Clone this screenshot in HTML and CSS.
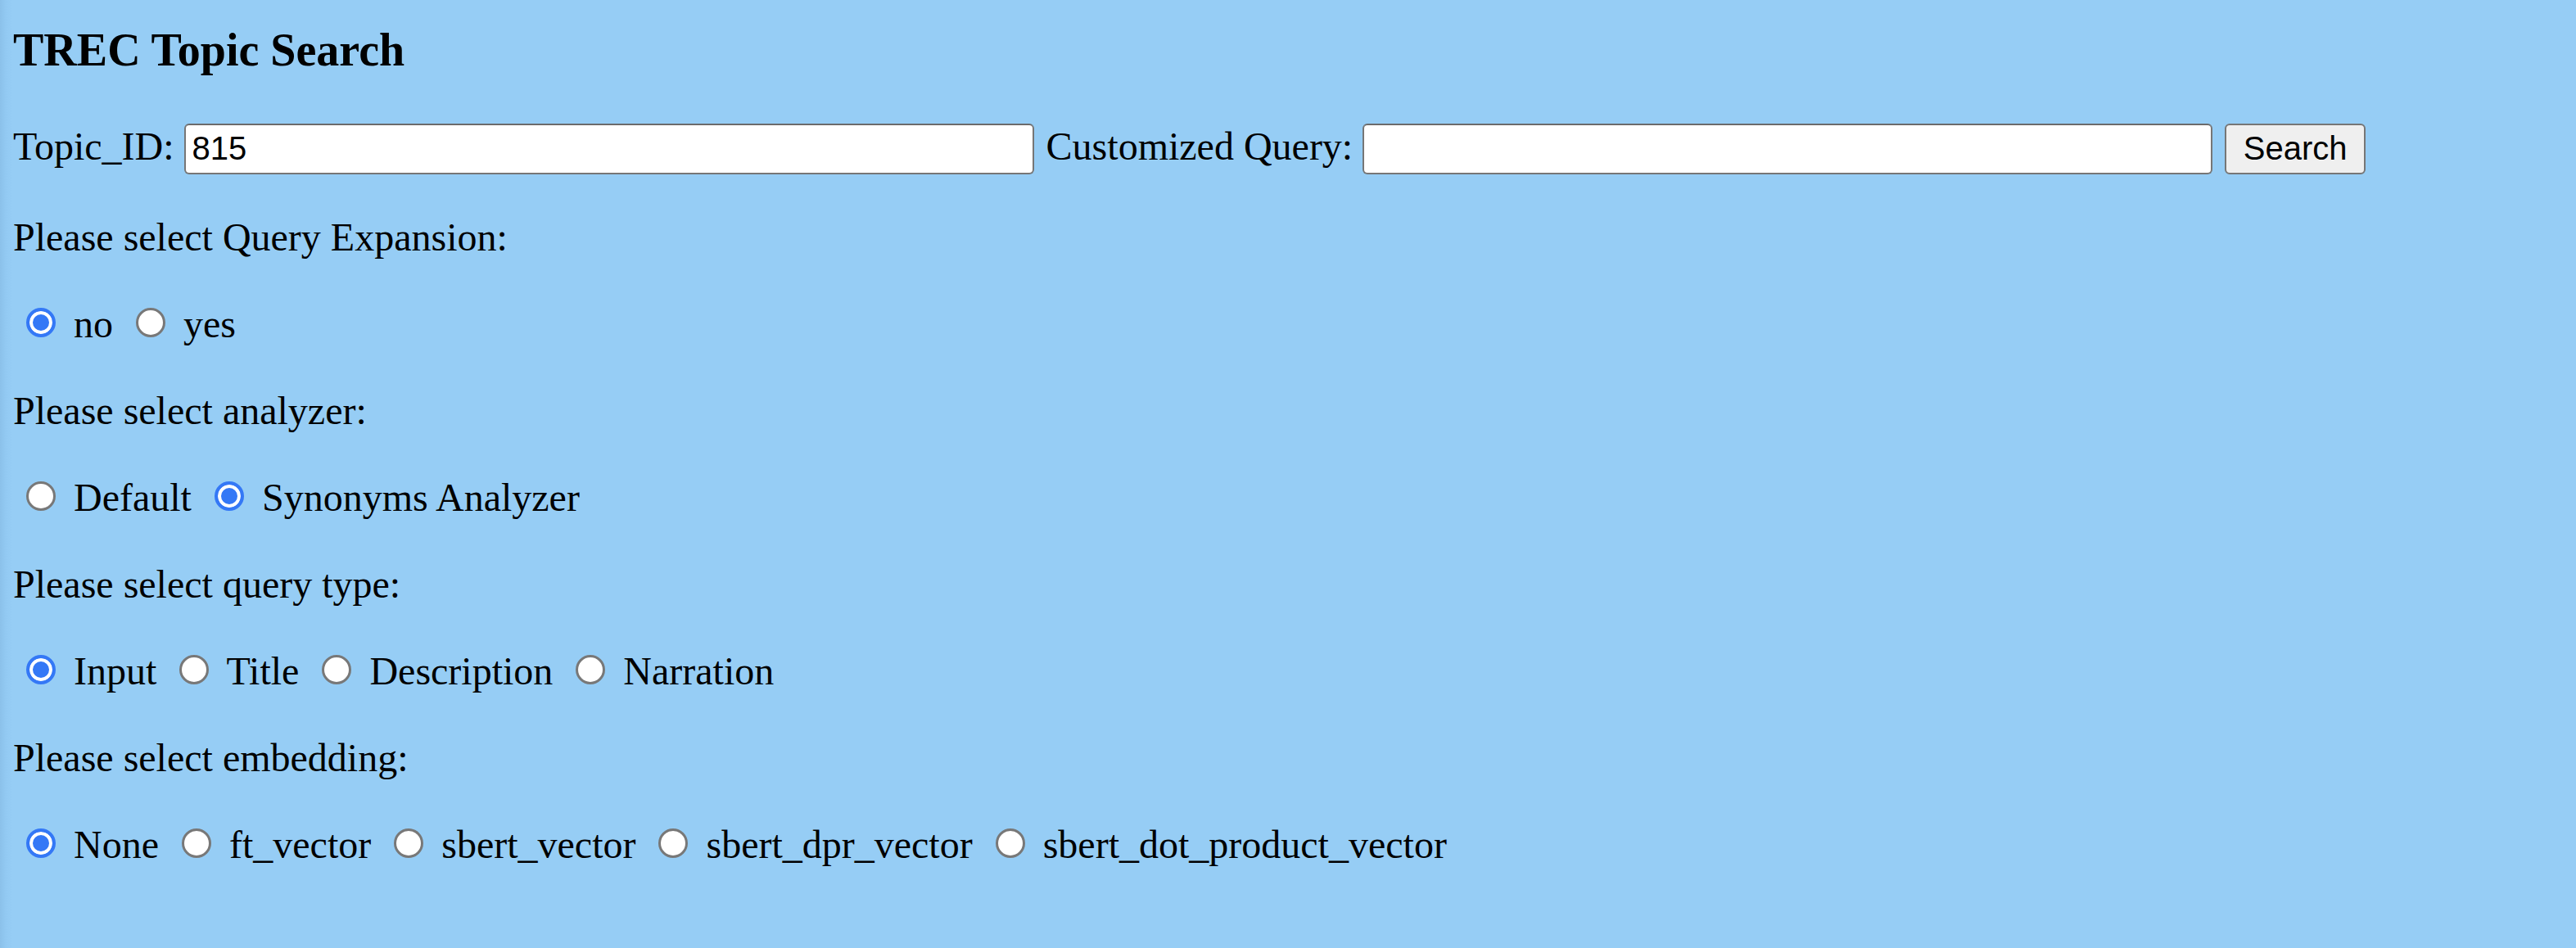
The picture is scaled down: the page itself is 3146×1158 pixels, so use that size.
FILE: index.html
```html
<!DOCTYPE html>
<html lang="en">
<head>
<meta charset="utf-8">
<title>TREC Topic Search</title>
<link rel="stylesheet" href="styles.css">
</head>
<body>
<h3 class="title">TREC Topic Search</h3>
<form class="search-form">
  <div class="row">Topic_ID: <input class="text-field" type="text" value="815"> Customized Query: <input class="text-field" type="text" value=""> <button class="search-btn" type="button">Search</button></div>
  <div class="row">Please select Query Expansion:</div>
  <div class="row"><label><input class="radio" type="radio" name="qe" checked> no</label> <label><input class="radio" type="radio" name="qe"> yes</label></div>
  <div class="row">Please select analyzer:</div>
  <div class="row"><label><input class="radio" type="radio" name="an"> Default</label> <label><input class="radio" type="radio" name="an" checked> Synonyms Analyzer</label></div>
  <div class="row">Please select query type:</div>
  <div class="row"><label><input class="radio" type="radio" name="qt" checked> Input</label> <label><input class="radio" type="radio" name="qt"> Title</label> <label><input class="radio" type="radio" name="qt"> Description</label> <label><input class="radio" type="radio" name="qt"> Narration</label></div>
  <div class="row">Please select embedding:</div>
  <div class="row"><label><input class="radio" type="radio" name="em" checked> None</label> <label><input class="radio" type="radio" name="em"> ft_vector</label> <label><input class="radio" type="radio" name="em"> sbert_vector</label> <label><input class="radio" type="radio" name="em"> sbert_dpr_vector</label> <label><input class="radio" type="radio" name="em"> sbert_dot_product_vector</label></div>
</form>
</body>
</html>
```

FILE: styles.css
```css
html {
  background: linear-gradient(to right, #8bc1ea 0, #93caf3 8px, #96cdf5 16px) #96cdf5;
  min-height: 100%;
}

body {
  margin: 0;
  padding: 0 0 0 16px;
  font-family: "Liberation Serif", "Times New Roman", serif;
  font-size: 48px;
  color: #000;
}

.title {
  margin: 29px 0 57px;
  font-size: 56px;
  line-height: 64px;
  font-weight: bold;
}

.search-form {
  margin: 0;
}

.row {
  margin: 48px 0;
  line-height: 58px;
  white-space: nowrap;
}

.text-field {
  box-sizing: border-box;
  width: 1038px;
  height: 62px;
  margin: 0 3px 0 0;
  padding: 0 8px;
  border: 2px solid #767676;
  border-top-color: #6b6b6b;
  border-radius: 6px;
  background: #fff;
  font-family: "Liberation Sans", Arial, sans-serif;
  font-size: 40px;
  color: #000;
  outline: none;
}

.search-btn {
  box-sizing: border-box;
  width: 172px;
  height: 62px;
  margin: 0;
  padding: 0;
  border: 2px solid #767676;
  border-radius: 6px;
  background: #efefef;
  font-family: "Liberation Sans", Arial, sans-serif;
  font-size: 40px;
  color: #000;
}

.radio {
  -webkit-appearance: none;
  appearance: none;
  box-sizing: border-box;
  width: 36px;
  height: 36px;
  margin: 9px 10px 0 16px;
  border: 3px solid #787878;
  border-radius: 50%;
  background: #fff;
}

.radio:checked {
  border: 4px solid #3478f6;
  background: #3478f6;
  box-shadow: inset 0 0 0 4px #fff;
}
```
